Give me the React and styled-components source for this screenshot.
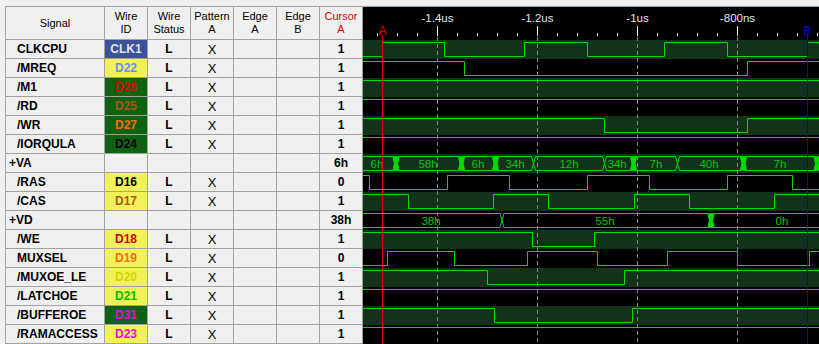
import React from 'react';
import styled, { createGlobalStyle } from 'styled-components';

const GlobalStyle = createGlobalStyle`
  html, body {
    margin: 0;
    padding: 0;
    background: #f0f0f0;
    overflow: hidden;
    font-family: "Liberation Sans", Arial, sans-serif;
  }
`

const Page = styled.div`
  display: flex;
  align-items: flex-start;
  padding: 6px 0 0 5px;
  width: 819px;
  height: 344px;
  box-sizing: border-box;
  overflow: hidden;
`

const Grid = styled.div`
  display: grid;
  grid-template-columns: 98px repeat(6, 42px);
  grid-template-rows: 32px;
  grid-auto-rows: 18px;
  gap: 1px;
  padding: 1px;
  background: #a0a0a0;
  flex-shrink: 0;
`

const HeadCell = styled.div`
  background: #f0f0f0;
  display: flex;
  align-items: center;
  justify-content: center;
  text-align: center;
  font-size: 11px;
  line-height: 13px;
  color: ${p => p.$color || '#000'};
`

const Cell = styled.div`
  background: ${p => p.$bg || '#f0f0f0'};
  color: ${p => p.$color || '#000'};
  display: flex;
  align-items: center;
  justify-content: ${p => (p.$left ? 'flex-start' : 'center')};
  padding-left: ${p => p.$pad || 0}px;
  font-size: ${p => (p.$thin ? 13 : 12)}px;
  font-weight: ${p => (p.$thin ? 'normal' : 'bold')};
  white-space: nowrap;
`

const WavePanel = styled.div`
  flex: 1;
  border-top: 1px solid #8fa4bb;
  background: #000;
  height: 338px;
  overflow: hidden;
`

const YEL = '#f2f258';
const GRN = '#0f6211';

const rows = [
  { name: 'CLKCPU', id: 'CLK1', bg: '#3b5296', fg: '#dfe6f5', cur: '1', hi: false, edges: [382.5, 444.5, 524.5, 587.5, 664.5, 727.5, 807.5] },
  { name: '/MREQ', id: 'D22', bg: YEL, fg: '#6a8cff', cur: '1', hi: true, edges: [464.5, 747.5] },
  { name: '/M1', id: 'D26', bg: GRN, fg: '#e00000', cur: '1', hi: true, edges: [] },
  { name: '/RD', id: 'D25', bg: GRN, fg: '#a8581a', cur: '1', hi: true, edges: [] },
  { name: '/WR', id: 'D27', bg: GRN, fg: '#ff6a10', cur: '1', hi: true, edges: [604.5, 747.5] },
  { name: '/IORQULA', id: 'D24', bg: GRN, fg: '#000', cur: '1', hi: true, edges: [] },
  {
    name: '+VA', bus: true, cur: '6h',
    trans: [[396, 1], [461.5, 1], [495.5, 1], [533.5, 0], [604.5, 0], [633.5, 1], [677.5, 0], [743.5, 1], [817, 1]],
    labels: [['6h', 377], ['58h', 428], ['6h', 478], ['34h', 515], ['12h', 569], ['34h', 617], ['7h', 656], ['40h', 709], ['7h', 780]],
  },
  { name: '/RAS', id: 'D16', bg: YEL, fg: '#000', cur: '0', hi: true, edges: [369.5, 447.5, 509.5, 587.5, 649.5, 727.5, 792.5] },
  { name: '/CAS', id: 'D17', bg: YEL, fg: '#a8581a', cur: '1', hi: true, edges: [408.5, 493.5, 548.5, 634.5, 689.5, 774.5] },
  {
    name: '+VD', bus: true, cur: '38h',
    trans: [[502, 0], [711, 1]],
    labels: [['38h', 431], ['55h', 605], ['0h', 782]],
  },
  { name: '/WE', id: 'D18', bg: YEL, fg: '#d80000', cur: '1', hi: true, edges: [532.5, 594.5] },
  { name: 'MUXSEL', id: 'D19', bg: YEL, fg: '#ff6a10', cur: '0', hi: false, edges: [387.5, 454.5, 527.5, 597.5, 667.5, 737.5, 809.5] },
  { name: '/MUXOE_LE', id: 'D20', bg: YEL, fg: '#d4d400', cur: '1', hi: true, edges: [487.5, 624.5] },
  { name: '/LATCHOE', id: 'D21', bg: YEL, fg: '#00c000', cur: '1', hi: true, edges: [] },
  { name: '/BUFFEROE', id: 'D31', bg: GRN, fg: '#e010e0', cur: '1', hi: true, edges: [494.5, 632.5] },
  { name: '/RAMACCESS', id: 'D23', bg: YEL, fg: '#e010e0', cur: '1', hi: true, edges: [] },
];

const X0 = 363;
const X1 = 819;
const LINE = '#00dc00';
const BAND = '#12331a';

function bitPath(r, top) {
  const hy = top + 2.5;
  const ly = top + 16.5;
  let lvl = r.hi;
  let d = `M${X0} ${lvl ? hy : ly}`;
  r.edges.forEach(x => {
    d += ` L${x} ${lvl ? hy : ly}`;
    lvl = !lvl;
    d += ` L${x} ${lvl ? hy : ly}`;
  });
  d += ` L${X1} ${lvl ? hy : ly}`;
  return d;
}

function BusWave({ r, top }) {
  const hy = top + 2.5;
  const ly = top + 16.5;
  const my = top + 9.5;
  const segs = [];
  const blobs = [];
  let prev = null;
  r.trans.forEach(([c, thick]) => {
    const h = thick ? 3 : 2;
    const startX = prev ? prev[0] + (prev[1] ? 3 : 2) : X0;
    const startM = prev ? (prev[1] ? `M${prev[0] + 1.5} ${my} L${startX} ${hy}` : `M${prev[0]} ${my} L${startX} ${hy}`) : `M${X0} ${hy}`;
    const endM = thick ? c - 1.5 : c;
    let d = `${startM} L${c - h} ${hy} L${endM} ${my} L${c - h} ${ly} L${startX} ${ly}`;
    if (prev) d += ` L${prev[1] ? prev[0] + 1.5 : prev[0]} ${my}`;
    segs.push(d);
    if (thick) {
      blobs.push(`M${c - 3} ${hy} L${c + 3} ${hy} L${c + 1.5} ${my} L${c + 3} ${ly} L${c - 3} ${ly} L${c - 1.5} ${my} Z`);
    }
    prev = [c, thick];
  });
  if (prev && prev[0] < X1 - 4) {
    const sx = prev[0] + (prev[1] ? 3 : 2);
    segs.push(`M${X1} ${hy} L${sx} ${hy} L${prev[1] ? prev[0] + 1.5 : prev[0]} ${my} L${sx} ${ly} L${X1} ${ly}`);
  }
  return (
    <g>
      {segs.map((d, i) => <path key={i} d={d} fill="none" stroke={LINE} strokeWidth="1" />)}
      {blobs.map((d, i) => <path key={'b' + i} d={d} fill={LINE} stroke={LINE} strokeWidth="0.6" />)}
      {r.labels.map(([t, x], i) => (
        <text key={'t' + i} x={x} y={top + 13.5} fill="#10c010" fontSize="11.5" textAnchor="middle"
          fontFamily="'Liberation Sans', Arial, sans-serif">{t}</text>
      ))}
    </g>
  );
}

const majors = [[437.5, '-1.4us'], [537.5, '-1.2us'], [637.5, '-1us'], [737.5, '-800ns']];
const minors = [];
for (let x = 377.5; x < X1; x += 20) minors.push(x);

function Waves() {
  return (
    <svg width={X1 - X0} height="337" viewBox={`${X0} 7 ${X1 - X0} 337`} style={{ display: 'block' }}>
      <rect x={X0} y="7" width={X1 - X0} height="337" fill="#000" />
      {rows.map((r, i) => (i % 2 === 0
        ? <rect key={i} x={X0} y={40 + 19 * i} width={X1 - X0} height="19" fill={BAND} /> : null))}
      {majors.map(([x]) => (
        <line key={x} x1={x} y1="37" x2={x} y2="344" stroke="#858585" strokeWidth="1" strokeDasharray="4 3" />
      ))}
      {rows.map((r, i) => {
        const top = 40 + 19 * i;
        return r.bus
          ? <BusWave key={i} r={r} top={top} />
          : <path key={i} d={bitPath(r, top)} fill="none" stroke={LINE} strokeWidth="1" />;
      })}
      {minors.map(x => (
        <line key={x} x1={x} y1={(x - 437.5) % 100 === 0 ? 26 : 33} x2={x} y2="36" stroke="#e8eef4" strokeWidth="1" />
      ))}
      {majors.map(([x, t]) => (
        <text key={t} x={x} y="22" fill="#dfe7ef" fontSize="11.5" textAnchor="middle"
          fontFamily="'Liberation Sans', Arial, sans-serif">{t}</text>
      ))}
      <line x1="382.5" y1="35" x2="382.5" y2="344" stroke="#e00000" strokeWidth="1" />
      <text x="382.5" y="34.5" fill="#e00000" fontSize="12" textAnchor="middle"
        fontFamily="'Liberation Sans', Arial, sans-serif">A</text>
      <line x1="807.5" y1="35" x2="807.5" y2="344" stroke="#0000e0" strokeWidth="1" />
      <text x="807.5" y="34.5" fill="#0000e0" fontSize="12" textAnchor="middle"
        fontFamily="'Liberation Sans', Arial, sans-serif">B</text>
    </svg>
  );
}

const heads = [['Signal'], ['Wire', 'ID'], ['Wire', 'Status'], ['Pattern', 'A'], ['Edge', 'A'], ['Edge', 'B'], ['Cursor', 'A']];

export default function App() {
  return (
    <>
      <GlobalStyle />
      <Page>
        <Grid>
          {heads.map((h, i) => (
            <HeadCell key={i} $color={i === 6 ? '#e00000' : '#000'}>
              {h[0]}{h[1] && <br />}{h[1]}
            </HeadCell>
          ))}
          {rows.map(r => (
            <React.Fragment key={r.name}>
              <Cell $left $pad={r.bus ? 3 : 11}>{r.name}</Cell>
              <Cell $bg={r.bus ? null : r.bg} $color={r.fg}>{r.bus ? '' : r.id}</Cell>
              <Cell>{r.bus ? '' : 'L'}</Cell>
              <Cell $thin>{r.bus ? '' : 'X'}</Cell>
              <Cell />
              <Cell />
              <Cell>{r.cur}</Cell>
            </React.Fragment>
          ))}
        </Grid>
        <WavePanel>
          <Waves />
        </WavePanel>
      </Page>
    </>
  );
}
